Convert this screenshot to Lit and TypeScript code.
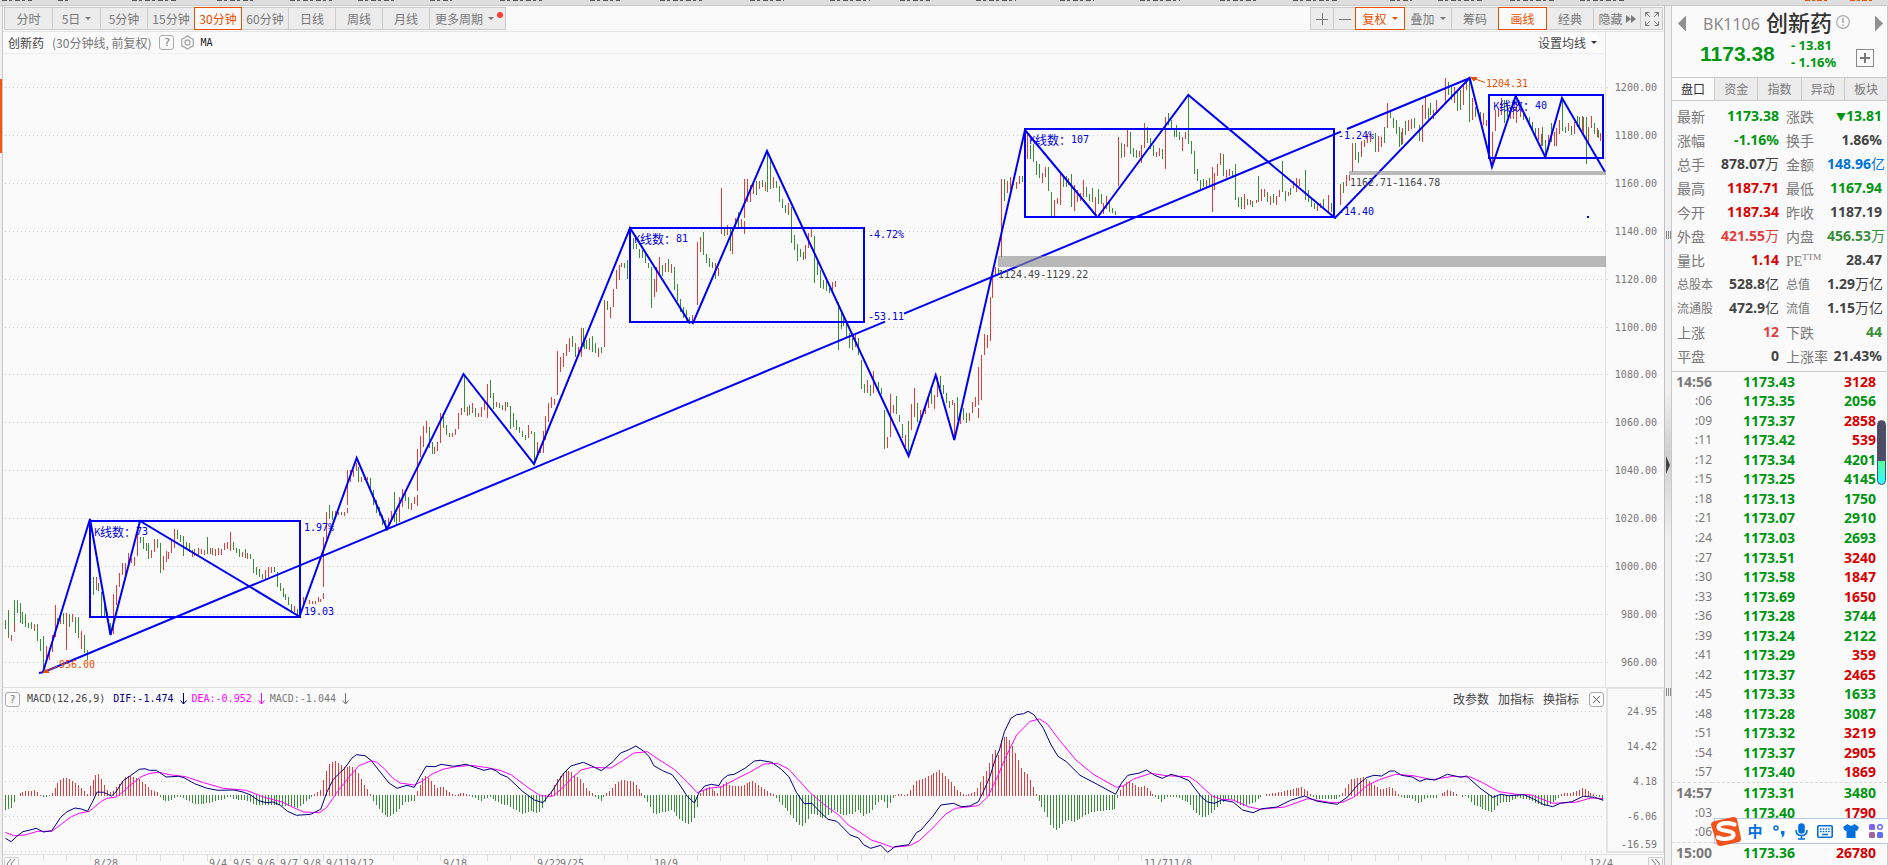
import { LitElement, html, svg, css } from "lit";
import { customElement } from "lit/decorators.js";
import { classMap } from "lit/directives/class-map.js";

const STEP = 2.92;
const GRID = [87, 135, 183, 231, 279, 327, 374, 422, 470, 518, 566, 614, 662];

/* A block of samples: origin, horizontal resolution, and x,high,low triples (three units per pixel down). */
interface Block { ox: number; oy: number; sx: number; up: string; down: string; }

const BLOCKS: Block[] = [
  { ox: 0, oy: 480, sx: 2.8,
    down: "15,420,446;23,390,474;40,360,430;48,360,400;57,368,430;62,395,432;72,403,440;80,428,443;88,426,448;105,432,482;113,478,512;122,468,575;162,415,440;178,400,432;194,402,440;211,410,460;219,410,475;236,465,520;245,510,540;261,291,345;276,308,332;284,335,408;292,365,410;301,395,412;310,430,465;393,170,188;401,172,208;410,190,212;415,190,236;440,178,205;449,188,278;497,150,178;505,165,185;513,168,228;522,185,210;530,188,215;545,208,228;580,171,222;596,203,225;653,185,210;661,205,220;670,208,230;686,208,235;702,222,236;710,237,279;718,260,284;726,268,290;735,282,296;768,262,275;776,275,320;785,310,334;793,325,350;800,342,360;808,350,375;817,372,400;833,388,408",
    up: "32,465,483;40,430,455;96,433,453;130,498,545;138,505,540;146,465,515;154,375,470;170,405,432;186,400,510;202,403,425;228,452,507;269,291,330;318,343,462;326,315,375;334,280,321;343,248,285;351,250,290;360,220,262;368,235,250;376,230,258;385,160,228;424,210,233;432,178,215;457,228,270;465,213,245;473,215,238;480,180,220;489,147,203;538,210,230;555,205,228;563,208,222;572,210,225;588,205,222;604,208,228;612,205,225;620,208,225;628,188,210;637,185,207;645,156,212;678,215,232;694,218,236;743,270,300;751,262,290;760,262,278;825,378,396;850,350,372;866,360,372;874,362,372;883,362,372;891,350,366;898,358,366;905,338,356;905,170,320;914,95,185" },
  { ox: 280, oy: 340, sx: 3,
    up: "130,590,630;139,515,560;166,513,530;176,516,524;193,515,527;202,504,518;202,390,494;211,390,426;220,390,412;229,370,392;244,410,426;262,412,420;325,535,560;334,513,540;358,470,545;367,447,500;394,488,510;403,472,492;412,465,498;412,327,453;421,288,350;430,258,320;439,243,280;463,320,342;472,305,332;481,219,310;517,278,292;526,268,285;535,220,266;544,204,225;562,200,228;577,190,220;595,218,230;604,200,230;613,185,210;622,132,233;649,186,200;676,186,212;745,255,295;772,305,345;781,318,340;790,273,338;796,228,300;805,189,245;814,170,205;823,178,196;832,33,165;841,50,95;850,38,80;859,12,48;868,0,36;887,10,50;905,0,52;955,28,50;973,0,20",
    down: "148,495,536;157,513,540;184,516,525;235,380,426;253,405,420;271,414,455;280,450,495;289,480,518;298,500,528;307,525,556;316,540,570;343,456,545;349,520,555;376,450,482;385,470,508;448,261,325;457,305,342;490,225,265;499,255,285;508,278,290;553,108,215;568,195,225;586,205,232;631,120,175;640,158,208;658,188,205;667,195,210;682,186,200;691,198,268;700,220,262;709,240,270;718,260,280;727,272,292;736,285,300;754,272,282;763,276,370;877,0,20;914,0,28;919,0,28;928,0,20;937,5,36;946,18,40;964,20,40" },
  { ox: 500, oy: 120, sx: 2.8,
    up: "177,700,738;185,672,708;194,655,694;219,680,700;228,625,712;250,655,690;275,685,710;292,540,680;309,560,594;317,508,560;326,450,508;334,435,480;340,428,440;356,428,440;433,478,530;438,440,515;446,412,465;463,428,455;480,432,460;538,585,605;553,367,555;561,352,395;603,430,460;611,445,467;620,204,342;637,315,345;651,320,402;660,295,325;675,297,320;685,303,342;685,177,295;692,177,245;701,195,245;709,185,222;726,183,208;742,185,212;765,172,205;807,248,285;855,375,418;863,340,385;872,328,350;930,485,515;939,483,500;994,645,680;1030,780,818;1046,752,820;1085,950,985;1093,822,950;1102,855,880;1135,945,980;1152,852,930;1160,805,890;1177,870,910;1190,850,882;1200,835,865;1216,825,867;1225,770,830;1266,840,855;1272,850,950;1289,870,912;1306,885,905;1314,880,902;1322,845,880;1331,832,860;1340,865,895;1340,740,855;1348,705,840;1356,642,705;1364,645,683;1373,530,662;1378,460,533;1387,440,465;1404,177,410;1421,183,218;1429,170,206;1446,188,206;1454,168,190;1476,40,116",
    down: "202,648,678;211,678,710;233,625,680;242,660,686;258,648,685;267,670,697;284,682,698;301,543,570;348,428,444;358,420,478;373,355,388;382,372,388;390,388,415;399,390,414;407,400,430;416,430,445;424,440,564;455,435,468;471,417,455;488,440,510;497,492,542;505,538,575;513,560,595;522,570,605;530,590,612;569,337,405;578,402,430;587,415,440;595,425,445;603,455,476;628,325,347;645,322,392;668,275,322;718,182,225;734,180,200;749,100,215;757,120,208;774,183,203;782,197,245;790,238,264;799,255,278;816,262,368;824,345,390;833,373,422;841,388,410;850,395,420;880,348,488;889,425,465;897,450,505;905,480,508;914,478,512;922,505,518;948,545,690;957,580,628;962,595,618;971,600,650;979,640,684;988,655,690;1003,655,706;1012,720,806;1020,792,818;1038,795,828;1060,785,808;1068,805,822;1076,870,987;1110,828,882;1118,885,905;1127,912,955;1143,903,1005;1169,850,905;1208,800,852;1233,768,805;1242,795,822;1250,820,850;1258,842,865;1280,830,900;1297,865,900;1306,880,908;1395,445,462;1412,178,242;1438,170,195;1463,170,186;1485,75,116;1493,72,126" },
  { ox: 980, oy: 70, sx: 3,
    up: "82,332,370;91,320,360;109,335,358;118,318,342;142,185,266;187,308,338;196,290,320;223,390,438;232,383,402;241,312,405;265,325,345;283,345,422;292,360,395;301,368,393;310,330,380;346,380,436;370,400,432;379,378,418;415,200,348;433,222,260;442,178,230;478,242,262;484,225,278;493,158,235;529,245,262;538,234,258;556,140,297;607,200,243;616,185,208;679,330,350;697,290,426;703,308,360;712,282,318;721,248,285;739,300,325;748,296,318;793,372,418;811,390,405;829,390,400;844,356,392;853,358,382;871,378,405;889,378,404;898,360,380;925,365,378;940,332,355;949,325,365;958,326,348;1012,403,422;1021,398,415;1045,375,430",
    down: "73,327,392;100,320,345;127,318,334;160,225,275;169,272,315;178,282,325;205,290,362;214,365,438;250,318,350;259,318,350;274,312,411;319,350,382;328,372,392;337,355,395;355,358,402;364,372,402;388,396,426;397,415,430;406,424,435;424,218,264;451,185,252;460,235,262;469,240,264;502,170,220;511,205,238;520,225,258;547,238,268;565,130,165;574,150,180;583,175,200;589,165,200;598,185,210;625,78,222;634,212,252;643,242,312;652,296,332;661,330,358;670,328,350;688,323,350;730,252,318;757,304,322;766,282,390;775,380,412;784,380,418;802,388,405;817,392,412;835,318,396;862,365,395;880,372,400;907,272,366;916,362,392;931,355,375;976,300,390;985,360,395;994,385,412;1003,398,418;1030,388,412;1054,403,425" },
  { ox: 1320, oy: 60, sx: 3,
    up: "61,372,435;79,345,378;88,345,362;97,248,335;124,243,290;133,240,262;142,222,248;151,218,245;175,228,275;184,232,262;202,128,205;247,205,252;265,180,212;274,178,208;307,135,245;316,110,178;340,150,178;349,120,160;376,53,125;403,80,130;430,75,135;440,60,90;458,115,180;490,160,195;499,180,198;518,215,320;526,150,212;535,148,172;544,115,165;571,140,178;580,145,178;589,125,190;601,150,172;655,205,240;664,222,258;685,225,270;703,215,258;709,205,258;718,180,222;745,190,212;763,185,222;790,170,225;805,200,245;814,168,205;832,205,230;841,220,242",
    down: "34,430,452;70,365,398;106,248,300;115,275,308;166,218,275;193,200,248;211,150,175;220,175,205;229,180,222;238,200,262;244,215,255;256,183,225;283,175,205;298,195,242;325,145,180;331,130,165;385,66,105;394,80,120;412,95,152;421,90,150;448,55,185;467,140,170;481,155,178;553,120,190;562,130,172;610,158,180;628,172,195;637,185,208;646,205,232;667,200,258;676,240,288;694,190,245;727,115,212;736,200,218;754,198,225;772,168,200;778,170,200;787,168,212;799,170,312;823,190,222;835,210,235" },
];

function candlePath(kind: "up" | "down"): string {
  return BLOCKS.map((b) => b[kind].split(";").map((s) => {
    const [x, hi, lo] = s.split(",").map(Number);
    const px = Math.floor(b.ox + x / b.sx) + 0.5;
    return `M${px} ${Math.round(b.oy + hi / 3)}V${Math.round(b.oy + lo / 3)}`;
  }).join("")).join("");
}

type Pt = [number, number];
function parse(src: string, ox: number, sx: number, dy: number): Pt[] {
  return src.split(" ").map((s) => {
    const [x, y] = s.split(",").map(Number);
    return [ox + x / sx, dy + y / 3] as Pt;
  });
}
const line = (pts: Pt[]) => pts.map(([x, y]) => `${x.toFixed(1)},${y.toFixed(1)}`).join(" ");

const DIF: Pt[] = [
  ...parse("15,1075 31,1085 46,1070 64,1055 92,1048 101,1045 122,1056 145,1052 170,1012 188,995 210,984 228,987 245,994 258,968 272,936 290,937 312,948 325,935 345,902 365,887 390,868 406,866 418,871 438,871 465,891 500,889 515,893 545,911 580,925 610,931 655,930 680,936 700,944 725,962 745,968 765,966 785,976 805,994 830,1006 870,1003 898,988 915,937 932,900 945,885 965,865 985,835 998,824 1022,827 1040,842 1060,870 1090,910 1112,925 1140,916 1160,922 1175,892 1193,859 1218,860 1235,853 1270,859 1305,853 1330,862 1355,871 1375,866 1390,873", 0, 2.8, 480),
  ...parse("0,282 20,292 60,335 90,360 112,368 135,335 165,282 185,258 218,247 240,258 265,272 295,245 315,219 335,210 355,198 375,213 390,230 402,257 425,272 450,284 470,315 490,350 508,369 520,338 535,318 552,313 572,317 580,300 595,286 612,283 640,265 665,243 680,241 710,247 735,268 755,290 775,338 795,371 815,370 840,400 857,418 880,424 915,465 937,474 950,494 968,505 995,496 1013,517 1032,500 1068,494 1088,458 1100,450 1130,410 1152,375 1185,370 1205,380 1228,378 1250,365 1265,330 1280,290 1295,235 1305,210 1318,155 1335,115 1350,104 1368,101 1380,94 1395,104 1420,145 1440,195 1458,229 1480,245 1510,280", 500, 2.613, 680),
  ...parse("0,286 45,313 93,343 108,310 125,286 155,279 174,270 195,286 215,295 238,283 262,291 285,302 300,325 318,352 335,367 352,370 370,360 400,366 425,390 452,398 475,386 515,381 550,361 587,348 620,364 672,373 700,350 725,315 748,293 768,286 788,288 810,273 822,273 840,286 868,291 888,304 905,297 928,300 960,283 995,292 1010,288 1045,324 1078,352 1100,343 1120,347 1160,344 1185,357 1210,373 1235,380 1255,370 1285,365 1315,349 1345,352 1367,361", 1080, 2.613, 680),
];
const DEA: Pt[] = [
  ...parse("15,1057 38,1067 70,1065 105,1054 145,1054 175,1030 200,1010 222,1000 250,994 285,963 300,955 325,951 345,935 370,911 395,890 420,880 445,877 475,884 520,890 570,908 625,925 690,931 740,952 790,966 820,982 850,996 895,998 915,982 945,935 980,888 1005,857 1040,842 1055,847 1075,865 1100,895 1120,909 1160,915 1180,905 1210,882 1240,868 1275,860 1320,856 1365,863", 0, 2.8, 480),
  ...parse("0,271 30,285 70,320 105,347 138,349 165,322 190,292 212,270 240,262 290,264 320,242 350,219 385,215 410,235 455,268 490,307 515,338 545,325 580,320 620,295 650,278 690,252 725,250 755,268 780,300 810,338 845,372 885,405 910,435 940,456 970,480 1000,491 1025,502 1070,497 1095,482 1130,445 1165,402 1190,385 1250,377 1275,350 1300,290 1320,235 1350,165 1385,124 1410,117 1430,132 1465,185 1505,240", 500, 2.613, 680),
  ...parse("0,250 35,283 95,322 115,317 140,297 185,280 225,287 285,290 305,305 345,348 370,358 400,360 440,380 470,388 535,381 595,356 650,367 685,367 715,352 750,317 780,300 825,283 870,287 920,299 975,289 1020,291 1050,307 1095,335 1140,343 1180,345 1235,370 1295,367 1335,354 1367,356", 1080, 2.613, 680),
];
const HIST: Pt[] = [
  ...parse("15,-41 32,-37 40,-17 48,0 60,9 98,14 115,0 122,-4 132,-4 140,0 148,10 163,38 178,50 186,52 205,42 228,22 245,2 253,30 270,64 278,62 295,25 305,9 315,10 340,40 352,55 360,57 385,52 405,35 425,15 440,8 447,0 455,-12 475,-17 490,-4 510,-4 550,-26 580,-22 625,-10 640,-2 655,-10 690,-12 720,-28 770,-26 835,-35 860,-14 880,2 898,14 910,60 922,92 938,104 960,85 985,86 1000,75 1020,30 1038,3 1045,-14 1065,-45 1085,-65 1110,-50 1135,-18 1160,-14 1168,12 1185,52 1195,58 1210,40 1225,20 1240,26 1262,4 1270,0 1285,5 1300,7 1320,-1 1345,-15 1370,-2 1395,-18", 0, 2.8, 0),
  ...parse("0,-22 20,-28 60,-54 80,-46 100,-52 115,-32 125,0 135,12 150,48 172,73 185,70 210,48 230,16 245,1 265,-17 275,2 290,14 305,38 320,45 350,40 365,16 375,0 388,-20 403,-55 450,-42 475,-75 495,-84 510,-65 518,-20 525,12 545,25 570,6 580,30 592,40 603,26 630,28 662,42 690,18 705,7 718,0 735,-25 755,-48 780,-85 790,-90 800,-78 815,-52 850,-68 875,-42 895,-57 920,-54 937,-40 950,-60 970,-48 985,-22 1000,-8 1012,-35 1028,-5 1040,5 1055,0 1068,5 1085,40 1100,45 1125,60 1150,75 1175,45 1195,15 1215,0 1245,12 1260,48 1275,80 1285,120 1297,140 1302,120 1310,168 1322,178 1335,160 1350,120 1365,75 1380,60 1395,18 1402,0 1415,-32 1430,-60 1442,-95 1457,-102 1480,-70 1500,-77", 500, 2.613, 0),
  ...parse("0,-68 30,-48 92,-40 100,0 108,18 125,45 155,22 170,28 185,10 195,0 215,-18 225,-2 250,-2 265,-10 285,-20 300,-45 323,-67 345,-50 370,-20 395,-8 425,-30 455,-20 470,-3 490,2 515,7 550,16 582,25 600,6 615,-8 675,-10 690,12 710,48 740,54 765,35 790,15 812,25 830,4 845,-5 870,-8 888,-22 905,-6 930,-5 945,4 965,16 980,6 1000,-4 1010,0 1030,-28 1078,-48 1100,-20 1120,-18 1145,-4 1170,-10 1215,-32 1245,-12 1260,4 1290,8 1315,22 1335,5 1355,0 1367,-12", 1080, 2.613, 0),
];

function histPath(sign: number): string {
  let d = "";
  let k = 0;
  for (let x = 5.4; x <= 1603.5; x += STEP) {
    while (k < HIST.length - 2 && HIST[k + 1][0] < x) k++;
    const [x0, v0] = HIST[k];
    const [x1, v1] = HIST[k + 1];
    const v = v0 + ((v1 - v0) * (x - x0)) / (x1 - x0);
    if (v * sign > 0.2) {
      const px = Math.floor(x) + 0.5;
      d += sign > 0 ? `M${px} 796V${Math.round(795 - v)}` : `M${px} 795V${Math.round(796 - v)}`;
    }
  }
  return d;
}

const ZIGZAG = "M43 672L90 519L110.5 635L140 521L299.5 616.5L356.7 458L387 529L463.5 374L534 464L630 228L690 323.5M692.5 324L767 151L908.6 456L935.7 375L954.3 440L1025 130L1096.5 216M1098.5 216L1188.3 95L1335 218L1469.7 78L1492 167L1515.7 96L1545.3 157L1562 98L1605 172";
const TREND = "M39 673L44 672L885 321.7M904 313.7L1341 131.6M1347 129L1470 78";
const BOXES = [[90, 521, 210, 96], [630, 228, 234, 94], [1025, 129, 309, 88], [1489, 95, 114, 63]];
const COUNTS: [number, number, string][] = [[94, 531, "73"], [634, 238, "81"], [1029, 139, "107"], [1493, 105, "40"]];
const NOTES: [number, number, string, string][] = [
  [304, 527, "1.97%", "b"], [304, 611, "19.03", "b"], [868, 234, "-4.72%", "b"], [868, 316, "-53.11", "b"],
  [1338, 135, "-1.24%", "b"], [1338, 211, "-14.40", "b"], [1350, 182, "1162.71-1164.78", "k"],
  [998, 274, "1124.49-1129.22", "k"], [1486, 83, "1204.31", "o"], [59, 664, "956.00", "o"],
];
const DATES: [number, string][] = [[94, "8/28"], [209, "9/4"], [233, "9/5"], [257, "9/6"], [280, "9/7"], [303, "9/8"], [326, "9/11"], [350, "9/12"], [443, "9/18"], [537, "9/22"], [560, "9/25"], [654, "10/9"], [1144, "11/7"], [1168, "11/8"], [1589, "12/4"]];

const QUOTES: [string, string, string, string, string, string][] = [
  ["最新", "1173.38", "g", "涨跌", "▼13.81", "g"],
  ["涨幅", "-1.16%", "g", "换手", "1.86%", "k"],
  ["总手", "878.07万", "k", "金额", "148.96亿", "u"],
  ["最高", "1187.71", "r", "最低", "1167.94", "g"],
  ["今开", "1187.34", "r", "昨收", "1187.19", "k"],
  ["外盘", "421.55万", "r2", "内盘", "456.53万", "g2"],
  ["量比", "1.14", "r", "PE", "28.47", "k"],
  ["总股本", "528.8亿", "k", "总值", "1.29万亿", "k"],
  ["流通股", "472.9亿", "k", "流值", "1.15万亿", "k"],
  ["上涨", "12", "r2", "下跌", "44", "g2"],
  ["平盘", "0", "k", "上涨率", "21.43%", "k"],
];
const TICKS: string[][] = `14:56 1173.43 3128 r|:06 1173.35 2056 g|:09 1173.37 2858 r|:11 1173.42 539 r|:12 1173.34 4201 g|:15 1173.25 4145 g|:18 1173.13 1750 g|:21 1173.07 2910 g|:24 1173.03 2693 g|:27 1173.51 3240 r|:30 1173.58 1847 r|:33 1173.69 1650 r|:36 1173.28 3744 g|:39 1173.24 2122 g|:41 1173.29 359 r|:42 1173.37 2465 r|:45 1173.33 1633 g|:48 1173.28 3087 g|:51 1173.32 3219 r|:54 1173.37 2905 r|:57 1173.40 1869 r|14:57 1173.31 3480 g|:03 1173.40 1790 r|:06|15:00 1173.36 26780 r`
  .split("|").map((s) => s.split(" "));

const PERIODS: [string, string][] = [["分时", "p48"], ["5日", "p48 caret"], ["5分钟", "p47"], ["15分钟", "p47"], ["30分钟", "p47 on"], ["60分钟", "p47"], ["日线", "p47"], ["周线", "p47"], ["月线", "p47"], ["更多周期", "p77 caret dot"]];

const base = css`
  * { box-sizing: border-box; }
  button { font: inherit; color: inherit; background: none; border: 0; padding: 0; margin: 0; cursor: pointer; }
  table { border-collapse: collapse; border-spacing: 0; font: inherit; }
  td, th { padding: 0; font-weight: normal; text-align: left; }
`;

@customElement("chart-toolbar")
class ChartToolbar extends LitElement {
  static styles = [base, css`
    :host { display: flex; justify-content: space-between; height: 26px; padding: 1px 2px 0 1px; border-bottom: 1px solid #e4e4e4; font: 12px/22px "Noto Sans CJK SC", sans-serif; color: #787878; }
    .group { display: flex; height: 23px; }
    .b { display: flex; align-items: center; justify-content: center; height: 23px; margin-right: -1px; border: 1px solid #cbcbcb; background: #ececec; position: relative; white-space: nowrap; }
    .on { border-color: #e85000; color: #e85000; background: #fafafa; z-index: 1; }
    .caret::after { content: ""; margin-left: 5px; border: 3px solid transparent; border-top-color: currentColor; border-bottom: 0; }
    .dot { padding-right: 6px; }
    .dot::before { content: ""; position: absolute; right: 2px; top: 4px; width: 6px; height: 6px; border-radius: 50%; background: #ff3b3b; }
    .p47 { width: 48px; } .p48 { width: 49px; } .p77 { width: 77px; } .p22 { width: 23px; } .p24 { width: 24px; } .p49 { width: 50px; }
    svg { display: block; fill: none; stroke: #787878; }
    .ff { margin-left: 3px; fill: #787878; stroke: none; }
  `];
  render() {
    return html`
      <nav class="group">${PERIODS.map(([t, c]) => html`<button class="b ${c}">${t}</button>`)}</nav>
      <div class="group">
        <button class="b p24" aria-label="放大"><svg width="12" height="12"><path d="M0 6.5H12M6.5 0V12" /></svg></button>
        <button class="b p22" aria-label="缩小"><svg width="12" height="12"><path d="M0 6.5H12" /></svg></button>
        <button class="b p49 caret on">复权</button>
        <button class="b p47 caret">叠加</button>
        <button class="b p47">筹码</button>
        <button class="b p48 on">画线</button>
        <button class="b p47">经典</button>
        <button class="b p47">隐藏<svg class="ff" width="10" height="8"><path d="M0 0L5 4L0 8ZM5 0L10 4L5 8Z" /></svg></button>
        <button class="b p22" aria-label="全屏"><svg width="14" height="14"><path d="M.5 4.5V.5H4.5M.5 .5L5 5M9.5 .5H13.5V4.5M13.5 .5L9 5M.5 9.5V13.5H4.5M.5 13.5L5 9M13.5 9.5V13.5H9.5M13.5 13.5L9 9" /></svg></button>
      </div>`;
  }
}

@customElement("price-chart")
class PriceChart extends LitElement {
  static styles = [base, css`
    :host { display: block; font: 12px/22px "Noto Sans CJK SC", sans-serif; color: #444; }
    .head { display: flex; height: 22px; }
    .title { flex: 1; display: flex; align-items: center; padding: 0 7px 0 5px; border-bottom: 1px solid #f0f0f0; margin-right: 1px; }
    .sub { color: #787878; margin: 0 8px; }
    .help { display: block; width: 15px; height: 15px; border: 1px solid #aaa; border-radius: 3px; font: 11px/13px "DejaVu Sans Mono", monospace; color: #787878; }
    .gear { margin: 0 5px 0 6px; display: block; }
    .ma { font: 10px/22px "DejaVu Sans Mono", monospace; color: #222; }
    .set { margin-left: auto; background: #fff; height: 15px; line-height: 15px; display: flex; align-items: center; }
    .set::after { content: ""; margin-left: 5px; border: 3px solid transparent; border-top-color: #333; border-bottom: 0; }
    .axis { width: 59px; border-left: 1px solid #e0e0e0; }
    svg.plot { display: block; width: 100%; height: auto; }
    .grid { stroke: #cfcfcf; stroke-dasharray: 1 3; shape-rendering: crispEdges; }
    .frame { stroke: #e0e0e0; shape-rendering: crispEdges; }
    .up { stroke: #e23c3c; shape-rendering: crispEdges; }
    .down { stroke: #388e38; shape-rendering: crispEdges; }
    .draw { fill: none; stroke: #0000f5; stroke-width: 2; }
    .gap { fill: #909090; fill-opacity: .62; }
    text { font: 10px "DejaVu Sans Mono", "Noto Sans CJK SC", monospace; dominant-baseline: central; }
    .zh { font: 12px "Noto Sans CJK SC", sans-serif; }
    .b { fill: #0000dc; } .k { fill: #484848; } .o { fill: #e85000; } .y { fill: #787878; }
  `];
  render() {
    return html`
      <div class="head">
        <div class="title">
          <span>创新药</span><span class="sub">(30分钟线, 前复权)</span>
          <button class="help">?</button>
          <svg class="gear" width="15" height="15" fill="none" stroke="#aaa"><path d="M7.500 .8L10 2.600L13.300 4.200V10.800L10 12.400L7.500 14.200L5 12.400L1.700 10.800V4.200L5 2.600Z" stroke-width="1.300" /><circle cx="7.500" cy="7.500" r="2.500" stroke-width="1.300" /></svg>
          <span class="ma">MA</span>
          <button class="set">设置均线</button>
        </div>
        <div class="axis"></div>
      </div>
      <svg class="plot" viewBox="3 54 1661 633" role="img" aria-label="K线图">
        ${GRID.map((y) => svg`<path class="grid" d="M5 ${y + 0.5}H1605" />`)}
        <path class="frame" d="M1605.5 54V687" />
        ${GRID.map((y, i) => svg`<path class="frame" d="M1605 ${y + 0.5}H1608" /><text class="y" x="1657" y="${y}" text-anchor="end">${(1200 - i * 20).toFixed(2)}</text>`)}
        <path class="up" d=${candlePath("up")} />
        <path class="down" d=${candlePath("down")} />
        ${BOXES.map(([x, y, w, h]) => svg`<rect class="draw" x=${x} y=${y} width=${w} height=${h} />`)}
        <path class="draw" d=${ZIGZAG} />
        <path class="draw" d=${TREND} />
        <rect class="gap" x="998" y="256" width="608" height="11" />
        <rect class="gap" x="1349" y="171" width="257" height="4" />
        <rect fill="#0000f5" x="1587" y="216" width="2" height="2" />
        <path d="M1471 77.500H1477L1474 81ZM1474 78.500L1485 82.500M43 672.500H49L46 669.500ZM46 671L58 666" fill="#e85000" stroke="#e85000" />
        ${COUNTS.map(([x, y, n]) => svg`<text class="b zh" x=${x} y=${y}><tspan font-size="10">K</tspan><tspan x=${x + 6}>线数：</tspan></text><text class="b" x=${x + 42} y=${y}>${n}</text>`)}
        ${NOTES.map(([x, y, t, c]) => svg`<text class=${c} x=${x} y=${y}>${t}</text>`)}
      </svg>`;
  }
}

@customElement("macd-chart")
class MacdChart extends LitElement {
  static styles = [base, css`
    :host { display: block; border-top: 1px solid #e0e0e0; font: 12px/22px "Noto Sans CJK SC", sans-serif; color: #444; }
    .head { display: flex; height: 22px; }
    .info { flex: 1; display: flex; align-items: center; padding: 0 2px; font: 10px/22px "DejaVu Sans Mono", monospace; }
    .help, .close { width: 15px; height: 15px; border: 1px solid #aaa; border-radius: 3px; color: #787878; line-height: 13px; }
    .help { margin-right: 7px; }
    .close { display: grid; place-items: center; margin-left: 1px; }
    .dif { color: #000080; margin-left: 8px; } .dea { color: #ff00ff; margin-left: 5px; } .mac { color: #787878; margin-left: 5px; }
    .info span { display: flex; align-items: center; gap: 6px; }
    .link { font: 12px/22px "Noto Sans CJK SC", sans-serif; margin-right: 9px; }
    .first { margin-left: auto; }
    .axis { width: 58px; border: 2px solid #e4e4e4; border-width: 1px 1px 0 2px; }
    svg { display: block; fill: none; }
    .plot { width: 100%; height: auto; overflow: visible; }
    .grid { stroke: #cfcfcf; stroke-dasharray: 1 3; shape-rendering: crispEdges; }
    .frame { stroke: #e0e0e0; shape-rendering: crispEdges; }
    .up { stroke: #e23c3c; shape-rendering: crispEdges; }
    .down { stroke: #388e38; shape-rendering: crispEdges; }
    .l1 { stroke: #000080; } .l2 { stroke: #ff00ff; }
    text { font: 10px "DejaVu Sans Mono", monospace; fill: #787878; dominant-baseline: central; }
  `];
  private arrow() {
    return html`<svg width="7" height="12" stroke="currentColor"><path d="M3.500 0V11M.5 7.500L3.500 11L6.500 7.500" /></svg>`;
  }
  render() {
    const ticks: number[] = [];
    for (let x = 43.5; x < 1604; x += 23.36) ticks.push(Math.floor(x) + 0.5);
    return html`
      <div class="head">
        <div class="info">
          <button class="help">?</button>MACD(12,26,9)
          <span class="dif">DIF:-1.474${this.arrow()}</span>
          <span class="dea">DEA:-0.952${this.arrow()}</span>
          <span class="mac">MACD:-1.044${this.arrow()}</span>
          <button class="link first">改参数</button><button class="link">加指标</button><button class="link">换指标</button>
          <button class="close" aria-label="关闭"><svg width="7" height="7" stroke="#666"><path d="M0 0L7 7M7 0L0 7" /></svg></button>
        </div>
        <div class="axis"></div>
      </div>
      <svg class="plot" viewBox="3 710 1661 155" role="img" aria-label="MACD">
        ${[711, 746, 781, 816, 851].map((y) => svg`<path class="grid" d="M5 ${y + 0.5}H1605" />`)}
        ${[[711, "24.95"], [746, "14.42"], [781, "4.18"], [816, "-6.06"], [844, "-16.59"]].map(([y, t]) => svg`<text x="1657" y=${y} text-anchor="end">${t}</text>`)}
        <path d="M1607 710V852H1664" stroke="#e4e4e4" stroke-width="2" />
        <path class="frame" d="M1663.500 710V852M3 854.500H1664" />
        ${ticks.map((x) => svg`<path class="frame" d="M${x} 854V861" />`)}
        <path class="up" d=${histPath(1)} /><path class="down" d=${histPath(-1)} />
        <polyline class="l2" points=${line(DEA)} /><polyline class="l1" points=${line(DIF)} />
        ${DATES.map(([x, t]) => svg`<text x=${x} y="863">${t}</text>`)}
        <path d="M4.500 870V858.500Q4.500 857.500 5.500 857.500H17.500Q18.500 857.500 18.500 858.500V870M1648.500 870V858.500Q1648.500 857.500 1649.500 857.500H1661.500Q1662.500 857.500 1662.500 858.500V870" stroke="#d0d0d0" />
        <path d="M11 859L7 864L11 869M15 859L11 864L15 869M1651.500 859L1655.500 864L1651.500 869M1655.500 859L1659.500 864L1655.500 869" stroke="#787878" />
      </svg>`;
  }
}

@customElement("quote-panel")
class QuotePanel extends LitElement {
  static styles = [base, css`
    :host { display: flex; flex-direction: column; width: 217px; height: 100%; border-left: 1px solid #c8c8c8; border-right: 1px solid #c8c8c8; background: #fafafa; font: 14px/24px "Noto Sans", "Noto Sans CJK SC", sans-serif; }
    .name { display: flex; align-items: center; height: 35px; padding: 0 4px 0 6px; color: #8a8a8a; }
    .code { font-size: 16px; margin-left: 17px; }
    .title { font: 500 22px/28px "Noto Sans CJK SC", sans-serif; color: #333; margin: 0 0 6px 6px; }
    .warn { margin: 0 0 4px 4px; display: block; }
    .left, .right { width: 8px; height: 16px; background: #909090; }
    .left { clip-path: polygon(100% 0, 0 50%, 100% 100%); }
    .right { clip-path: polygon(0 0, 100% 50%, 0 100%); margin-left: auto; }
    .price { display: flex; height: 36px; color: #009611; font-weight: bold; }
    .big { font: bold 21px/26px "Liberation Sans", sans-serif; margin-left: 28px; width: 91px; }
    .delta { font-size: 13px; line-height: 17px; margin-top: -4px; }
    .add { width: 18px; height: 18px; border: 1px solid #8a8a8a; margin: 8px 13px 0 auto; display: grid; place-items: center; }
    .tabs { display: flex; height: 24px; border-top: 1px solid #cbcbcb; border-bottom: 1px solid #cbcbcb; }
    .tab { flex: 1; font: 12px/22px "Noto Sans CJK SC", sans-serif; color: #787878; background: #ececec; border-left: 1px solid #cbcbcb; }
    .tab.on { background: #fafafa; color: #333; border-left: 0; }
    .quotes { width: 100%; margin: 3px 0; table-layout: fixed; }
    .quotes tr { height: 24px; }
    .quotes th { color: #787878; font: 14px/20px "Noto Sans CJK SC", sans-serif; white-space: nowrap; padding-left: 5px; }
    .quotes th + td + th { padding-left: 7px; }
    .quotes .three { font-size: 12px; }
    .quotes td { text-align: right; font-weight: bold; line-height: 20px; white-space: nowrap; }
    .quotes i { font: 14px/14px "Noto Sans CJK SC", sans-serif; }
    .quotes small { font-size: 10px; line-height: 10px; }
    .serif { font-family: "Liberation Serif", serif; line-height: 14px; }
    .serif sup { font-size: 9px; line-height: 1px; }
    .c1 { width: 45px; } .c2 { width: 62px; } .c3 { width: 48px; }
    .last { padding-right: 5px; }
    .g { color: #009611; } .r { color: #d80000; } .k { color: #444; } .u { color: #0074d4; } .r2 { color: #e23c3c; } .g2 { color: #388e38; }
    .feed { flex: 1; min-height: 0; border-top: 1px solid #cbcbcb; padding-bottom: 2px; }
    .ticks { width: 100%; height: 100%; table-layout: fixed; line-height: 16px; }
    .ticks td { text-align: right; font-weight: bold; }
    .ticks th { text-align: right; color: #787878; font-size: 12px; line-height: 16px; }
    .ticks .hour { font-size: 14px; font-weight: bold; }
    .ticks .sep > * { border-top: 1px dashed #d8d8d8; }
    .t1 { width: 40px; } .t2 { width: 83px; }
    .vol { padding-right: 11px; }
  `];
  private value(v: string) {
    const m = v.match(/^(▼?)([^万亿]*)([万亿]*)$/)!;
    return html`${m[1] ? html`<small>${m[1]}</small>` : ""}${m[2]}${m[3] ? html`<i>${m[3]}</i>` : ""}`;
  }
  private label(t: string) {
    return t === "PE" ? html`<span class="serif">PE<sup>TTM</sup></span>` : t;
  }
  render() {
    return html`
      <div class="name">
        <button class="left" aria-label="上一个"></button><span class="code">BK1106</span><h1 class="title">创新药</h1>
        <svg class="warn" width="14" height="14" fill="none" stroke="#aaa"><circle cx="7" cy="7" r="6.300" stroke-width="1.200" /><path d="M7 3V8M7 9.500V11" stroke-width="1.600" /></svg>
        <button class="right" aria-label="下一个"></button>
      </div>
      <div class="price">
        <div class="big">1173.38</div>
        <div class="delta"><div>- 13.81</div><div>- 1.16%</div></div>
        <button class="add" aria-label="添加"><svg width="10" height="10" stroke="#777" stroke-width="2"><path d="M0 5H10M5 0V10" /></svg></button>
      </div>
      <div class="tabs">${["盘口", "资金", "指数", "异动", "板块"].map((t, i) => html`<button class=${classMap({ tab: true, on: i === 0 })}>${t}</button>`)}</div>
      <table class="quotes">
        <colgroup><col class="c1" /><col class="c2" /><col class="c3" /><col /></colgroup>
        ${QUOTES.map(([a, b, c, d, e, f], i) => html`<tr>
          <th class=${classMap({ three: i === 7 || i === 8 })}>${this.label(a)}</th><td class=${c}>${this.value(b)}</td>
          <th class=${classMap({ three: i === 7 || i === 8 })}>${this.label(d)}</th><td class="last ${f}">${this.value(e)}</td></tr>`)}
      </table>
      <div class="feed"><table class="ticks">
        <colgroup><col class="t1" /><col class="t2" /><col /></colgroup>
        ${TICKS.map(([t, p, v, c], i) => html`<tr class=${classMap({ sep: i === 21 || i === 24 })}>
          <th class=${classMap({ hour: !t.startsWith(":") })}>${t}</th><td class="g">${p}</td><td class="vol ${c}">${v}</td></tr>`)}
      </table></div>`;
  }
}

@customElement("ime-bar")
class ImeBar extends LitElement {
  static styles = [base, css`
    :host { display: flex; align-items: center; height: 26px; width: 174px; background: #fff; border: 1px solid #b4c8e4; border-right: 0; color: #0070dc; }
    .logo { margin: 0 5px 0 -5px; flex: none; }
    .mode { font: bold 15px/24px "Noto Sans CJK SC", sans-serif; color: #0070dc; width: 16px; }
    .icons { display: flex; flex: 1; justify-content: space-between; align-items: center; padding-right: 5px; }
    svg { display: block; }
  `];
  render() {
    return html`
      <svg class="logo" width="32" height="31" viewBox="0 0 32 31"><path d="M5 5L23 1Q26 .5 27 3L31 22Q31.500 25 29 26L11 30Q8 30.500 7 28L1 9Q.5 6 5 5Z" fill="#f0531c" /><path d="M24.500 8.500C17 6 7.500 7 8.500 11.500C9.500 16 22.500 13.500 23.500 18C24.300 22.500 14.500 24.500 8 21.500" fill="none" stroke="#fff" stroke-width="4.200" stroke-linecap="round" /></svg>
      <div class="icons">
        <button class="mode">中</button>
        <svg width="12" height="14" fill="#0070dc"><circle cx="3" cy="4" r="2" fill="none" stroke="#0070dc" stroke-width="1.500" /><path d="M8 7H11.500V10Q11 13 8 13.500Q9.500 12 9.300 10.500H8Z" /></svg>
        <svg width="13" height="17" fill="none" stroke="#0070dc" stroke-width="1.600"><rect x="4" y="1" width="5" height="9" rx="2.500" fill="#0070dc" /><path d="M1 7Q1 12.500 6.500 12.500T12 7M6.500 12.500V16M3 16H10" /></svg>
        <svg width="16" height="13"><rect x=".8" y=".8" width="14.400" height="11.400" rx="1" fill="none" stroke="#0070dc" stroke-width="1.600" /><path d="M3 4H13M3 6.500H13" stroke="#0070dc" stroke-width="1.500" stroke-dasharray="1.600 1.100" /><path d="M5 9.500H11" stroke="#0070dc" stroke-width="1.500" /></svg>
        <svg width="16" height="14"><path d="M4.500 0Q8 3.500 11.500 0L16 3L14 7L12.500 6.500V14H3.500V6.500L2 7L0 3Z" fill="#0070dc" /></svg>
        <svg width="14" height="14"><rect width="6" height="6" rx="1.500" fill="#7a64f0" /><circle cx="11" cy="3" r="2.300" fill="none" stroke="#6a6af4" stroke-width="1.500" /><rect y="8" width="6" height="6" rx="1.500" fill="#a0609c" /><rect x="8" y="8" width="6" height="6" rx="1.500" fill="#5c6cf4" /></svg>
      </div>`;
  }
}

@customElement("app-root")
class AppRoot extends LitElement {
  static styles = [base, css`
    :host { display: flex; flex-direction: column; height: 100vh; overflow: hidden; position: relative; background: #fafafa; }
    .top { height: 6px; flex: none; background: #dedede; border-bottom: 1px solid #c8c8c8; }
    .marks { display: block; }
    .body { flex: 1; min-height: 0; display: flex; }
    .rail { width: 3px; flex: none; background: #f0f0f0; border-right: 1px solid #c8c8c8; padding-top: 73px; }
    .rail i { display: block; width: 2px; height: 74px; background: #f05a14; }
    main { flex: 1; min-width: 0; overflow: hidden; }
    .split { width: 7px; flex: none; border-left: 1px solid #c0c0c0; background: linear-gradient(#f0f0f0 0 45%, #d0d0d0 52%, #f0f0f0 62%); display: flex; flex-direction: column; align-items: center; }
    .grip { width: 5px; height: 8px; flex: none; background: repeating-linear-gradient(90deg, #888 0 1px, transparent 1px 2px); }
    .grip.one { margin-top: 225px; }
    .grip.two { margin-top: 214px; }
    .fold { width: 4px; height: 18px; margin-top: 217px; background: #444; clip-path: polygon(0 0, 100% 50%, 0 100%); flex: none; }
    quote-panel { flex: none; }
    .thumb { position: absolute; right: 2px; top: 420px; width: 9px; height: 65px; border-radius: 5px; border: 1px solid #4d4d68; background: linear-gradient(#4d4d68 0 64%, #58ff9c 64%, #2ff8ff 96%); }
    ime-bar { position: absolute; right: 0; bottom: 21px; }
  `];
  render() {
    const marks = [[2, 30], [58, 12], [132, 46], [217, 36], [290, 42], [358, 38], [430, 22], [500, 42], [590, 30], [660, 42], [750, 34], [830, 40], [900, 30], [976, 40], [1060, 34], [1140, 40], [1220, 36], [1293, 46], [1390, 22], [1438, 46], [1510, 44], [1580, 46]];
    return html`
      <div class="top"><svg class="marks" width="1888" height="1">
        ${marks.map(([x, w]) => svg`<path d="M${x} .5H${x + w}" stroke="#555" stroke-dasharray="5 2 3 3" />`)}
        <path d="M1805 .5H1828M1850 .5H1874" stroke="#e85000" stroke-dasharray="5 2 3 2" />
      </svg></div>
      <div class="body">
        <div class="rail"><i></i></div>
        <main>
          <chart-toolbar></chart-toolbar>
          <price-chart></price-chart>
          <macd-chart></macd-chart>
        </main>
        <div class="split"><span class="grip one"></span><span class="fold"></span><span class="grip two"></span></div>
        <quote-panel></quote-panel>
      </div>
      <div class="thumb"></div>
      <ime-bar></ime-bar>`;
  }
}
